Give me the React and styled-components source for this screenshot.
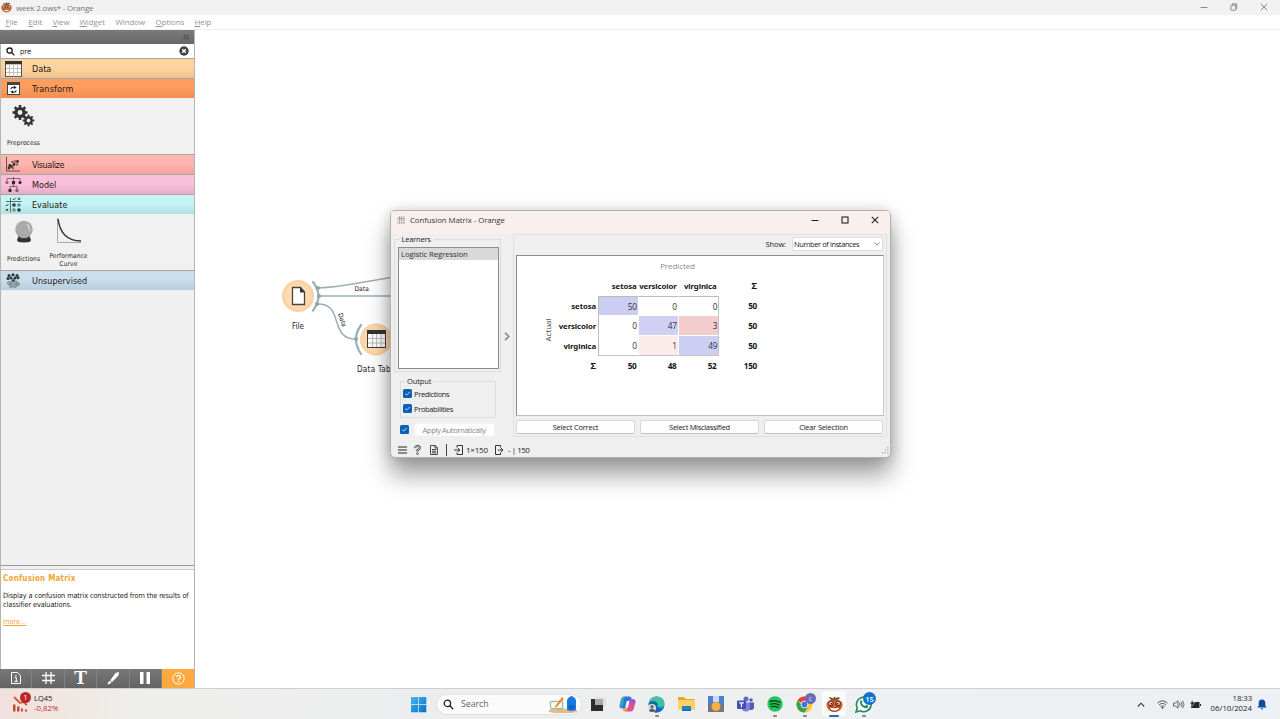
import React from "react";
import styled, { createGlobalStyle } from "styled-components";

const UI = '"Open Sans", "Noto Sans", sans-serif';
const TAHOMA = '"DejaVu Sans Condensed", "DejaVu Sans", sans-serif';

const Global = createGlobalStyle`
  * { box-sizing: border-box; }
  body { margin: 0; overflow: hidden; background: #fff; }
  svg { display: block; flex: none; }
`;

const Text = styled.span`
  font-family: ${(p) => p.$font || UI};
  font-size: ${(p) => p.$size || 8}px;
  letter-spacing: ${(p) => p.$track || 0}px;
  font-weight: ${(p) => p.$weight || 400};
  color: ${(p) => p.$color || "#222"};
  line-height: ${(p) => p.$line || 10}px;
  white-space: nowrap;
`;

const Screen = styled.div`
  width: 1280px; height: 719px;
  display: flex; flex-direction: column;
  background: #fff; overflow: hidden;
`;
const TitleBar = styled.header`
  height: 15px; background: #f2f2f2;
  display: flex; align-items: center; padding-left: 1px;
`;
const AppName = styled(Text)`flex: 1; margin-left: 4px;`;
const WindowButtons = styled.div`
  display: flex; gap: ${(p) => p.$gap}px; padding: 0 ${(p) => p.$right}px 1px 0; align-items: center;
`;
const MenuBar = styled.nav`
  height: 15px; display: flex; align-items: center; padding-left: 5.5px;
  border-bottom: 1px solid #f0f0f0;
`;
const MenuItem = styled(Text)`
  width: ${(p) => p.$w}px;
  &::first-letter { text-decoration: ${(p) => (p.$plain ? "none" : "underline")}; }
`;
const Body = styled.main`height: 658px; display: flex;`;

const Sidebar = styled.aside`
  width: 195px; height: 657.5px; display: flex; flex-direction: column;
  background: #f0f0f0; border-right: 1px solid #b4b4b4; border-left: 1px solid #b4b4b4;
`;
const SidebarHead = styled.div`
  height: 14px; margin-left: -1px; background: linear-gradient(#7b7b7b, #666);
  display: flex; justify-content: flex-end; align-items: center; padding-right: 5px;
`;
const SearchBox = styled.div`
  height: 14px; background: #fff; display: flex; align-items: center; padding: 0 5px 0 5px;
`;
const SearchValue = styled(Text)`flex: 1; margin-left: 5px; padding-top: 1px;`;
const Category = styled.div`
  height: 20px; display: flex; align-items: center; padding-left: 4px;
  border-top: 1px solid #a9a5a2; background: linear-gradient(${(p) => p.$from} 45%, ${(p) => p.$to});
`;
const CategoryIcon = styled.div`width: 27px; display: flex; justify-content: flex-start;`;
const ToolTray = styled.div`
  height: 56px; display: flex; background: #f1f1f1;
`;
const Tool = styled.div`
  width: 45px; display: flex; flex-direction: column; align-items: center; text-align: center;
  padding-top: ${(p) => p.$top || 4}px;
`;
const ToolLabel = styled(Text)`
  width: 44px; margin-top: ${(p) => p.$gap}px; white-space: normal;
`;
const Spacer = styled.div`flex: 1;`;
const Splitter = styled.div`height: 5px; border-top: 1px solid #999; border-bottom: 1px solid #c8c8c8; background: #f0f0f0;`;
const HelpPane = styled.section`
  height: 99px; background: #fff; padding: 4px 2px; display: flex; flex-direction: column; align-items: flex-start;
`;
const HelpTitle = styled(Text)``;
const HelpCopy = styled(Text)`margin-top: 8.5px;`;
const HelpLink = styled(Text)`margin-top: 7.5px; text-decoration: underline;`;
const DockBar = styled.div`height: 19px; display: flex; margin-left: -1px;`;
const DockButton = styled.div`
  width: ${(p) => (p.$on ? 32 : 32.6)}px; display: flex; align-items: center; justify-content: center;
  background: ${(p) => (p.$on ? "#ffa840" : "linear-gradient(#787878, #636363)")};
  border-right: ${(p) => (p.$on ? "0" : "1px solid #828282")};
`;

const Canvas = styled.div`flex: 1; position: relative; background: #fff;`;
const Scene = styled.svg`position: absolute; left: 0; top: 0;`;
const NodeLabel = styled(Text)`
  position: absolute; left: ${(p) => p.$x}px; top: ${(p) => p.$y}px;
  transform: rotate(${(p) => p.$turn || 0}deg);
`;
const Dialog = styled.section`
  position: absolute; left: 195px; top: 180px; width: 501px; height: 248px;
  background: #efefef; border: 1px solid #b3b0af; border-radius: 5px;
  box-shadow: 0 17px 24px rgba(0,0,0,.38), 0 0 13px rgba(0,0,0,.17);
  display: flex; flex-direction: column; overflow: hidden;
`;
const DialogTitle = styled.div`
  height: 23px; flex: none; background: #f9f0ee; display: flex; align-items: center; padding: 0 0 5px 6px;
`;
const DialogName = styled(Text)`flex: 1; margin-left: 5px;`;
const DialogBody = styled.div`height: 204px; display: flex; flex: none;`;
const LeftPane = styled.div`width: 110px; padding: 0 0 0 3px; display: flex; flex-direction: column;`;
const Group = styled.fieldset`
  margin: ${(p) => p.$top || 0}px 0 0 ${(p) => p.$left || 0}px; border: 1px solid #dedede; min-width: 0;
  width: ${(p) => p.$w}px; height: ${(p) => p.$h}px; padding: ${(p) => p.$pad};
`;
const Legend = styled.legend`padding: 0 2px; margin-left: ${(p) => p.$in}px; height: 10px; display: flex;`;
const LearnerList = styled.div`
  height: 122px; width: 101px; background: #fff; border: 1px solid #8c8c8c;
`;
const LearnerRow = styled.div`height: 12px; background: #d9d9d9; display: flex; align-items: center; padding-left: 2px;`;
const CheckRow = styled.label`display: flex; align-items: center; gap: 2px; height: 15px;`;
const ApplyRow = styled.div`display: flex; align-items: center; margin: 4px 0 0 5.5px; height: 15px; gap: 5px;`;
const PushButton = styled.div`
  width: ${(p) => p.$w}px; height: 14px; background: #fdfdfd; border: 1px solid ${(p) => (p.$dim ? "#f4f4f4" : "#d6d6d6")};
  border-bottom-color: ${(p) => (p.$dim ? "#eee" : "#c2c2c2")};
  border-radius: 2px; display: flex; align-items: center; justify-content: center;
`;
const Divider = styled.div`width: 12px; display: flex; align-items: center; justify-content: center;`;
const RightPane = styled.div`
  width: 374px; height: 203px; border: 1px solid #e0e0e0; padding: 1px 3px 0 2px;
  display: flex; flex-direction: column;
`;
const ShowRow = styled.div`height: 19px; display: flex; align-items: center; justify-content: flex-end; gap: 6px; padding-bottom: 3px;`;
const Select = styled.div`
  width: 91px; height: 14px; background: #fff; border: 1px solid #ddd; border-radius: 1px;
  display: flex; align-items: center; justify-content: space-between; padding: 0 2px 0 1px;
`;
const MatrixView = styled.div`
  height: 161px; width: 368px; background: #fff; border: 1px solid #999; border-color: #8e8e8e #c9c9c9 #bdbdbd #8e8e8e;
  padding: 5px 0 0 22px; display: flex; flex-direction: column;
`;
const Predicted = styled.div`margin-left: 78px; width: 121px; text-align: center; display: flex; justify-content: center; height: 15px;`;
const MatrixBody = styled.div`display: flex;`;
const ActualAxis = styled.div`
  width: 18px; padding-top: 20px; height: 80px; display: flex; align-items: center; justify-content: center;
`;
const ActualText = styled(Text)`transform: translateY(4px) rotate(-90deg);`;
const Matrix = styled.div`
  display: grid; grid-template-columns: 41px 41px 40px 40px 39px; grid-auto-rows: 20px;
`;
const Cell = styled.div`
  background: ${(p) => p.$bg || "transparent"};
  background-clip: padding-box;
  border-style: solid; border-width: 0 1px 1px 0; border-color: #fff;
  ${(p) => p.$l && "border-left: 1px solid #bcbcbc;"}
  ${(p) => p.$t && "border-top: 1px solid #bcbcbc;"}
  ${(p) => p.$r && "border-right-color: #c4c4c4;"}
  ${(p) => p.$b && "border-bottom-color: #c4c4c4;"}
  display: flex; justify-content: flex-end; align-items: center; padding: 1px ${(p) => p.$pr ?? 1}px 0 0; min-width: 0;
`;
const Actions = styled.div`display: flex; gap: 5px; padding: 4px 0 0 0;`;
const StatusBar = styled.footer`height: 19px; display: flex; align-items: center; padding: 4px 1px 0 7px;`;
const StatusItem = styled.div`display: flex; align-items: center; gap: ${(p) => p.$gap || 3}px; width: ${(p) => p.$w}px;`;
const Bar = styled.div`width: 1px; height: 12px; background: #444; margin-right: 7px;`;

const Taskbar = styled.footer`
  height: 31px; border-top: 1px solid #cfcfcf; display: flex; align-items: center;
  background: linear-gradient(90deg, #f1e0dd 0, #f1e6e0 60px, #eeeeec 130px, #ecedee 420px, #eef0f0 800px, #edf0f4 1280px);
`;
const Stocks = styled.div`width: 410px; padding-left: 12px; display: flex; align-items: center; gap: 4px;`;
const StockLines = styled.div`display: flex; flex-direction: column; padding-bottom: 1px;`;
const TaskSearch = styled.div`
  width: 146px; height: 21px; border-radius: 11px; background: #fbfbfb; border: 1px solid #e1e1e1; margin-left: 9px;
  display: flex; align-items: center; padding: 0 3px 0 6px; overflow: hidden;
`;
const SearchHint = styled(Text)`flex: 1; margin-left: 7px;`;
const Apps = styled.div`display: flex; flex: 1; margin-left: 1px;`;
const TaskApp = styled.div`
  width: 29.55px; height: 30px; display: flex; flex-direction: column; align-items: center; padding-top: 7px;
  position: relative;
`;
const ActivePlate = styled.div`
  width: 24px; height: 25px; margin-top: -5px; padding-top: 5px; background: #fbfbfb; border-radius: 2px; display: flex; justify-content: center;
`;
const Running = styled.div`
  position: absolute; bottom: 2px; width: ${(p) => (p.$on ? 10 : 4)}px; height: 2px; border-radius: 1px;
  background: ${(p) => (p.$on ? "#1572c4" : "#858585")};
`;
const Badge = styled.div`
  position: absolute; left: ${(p) => p.$x}px; top: ${(p) => p.$y}px; width: ${(p) => p.$d}px; height: ${(p) => p.$d}px;
  border-radius: 50%; background: ${(p) => p.$bg}; display: flex; align-items: center; justify-content: center;
`;
const StockIcon = styled.div`position: relative;`;
const Tray = styled.div`display: flex; align-items: center; padding-right: 13px;`;
const TrayIcons = styled.div`display: flex; align-items: center; gap: 5px; margin: 0 6px 0 12px;`;
const Clock = styled.div`width: 45px; display: flex; flex-direction: column; align-items: flex-end; margin-right: 5px; padding-bottom: 1px;`;

const OrangeFace = ({ size }) => (
  <svg width={size} height={size} viewBox="0 0 18 18">
    <path d="M1.500 6Q-.5 9 1 12Q3 17 9 17Q15 17 17 12Q18.500 9 16.500 6Q13 3 9 3.500Q5 3 1.500 6Z" fill="#e8682c" />
    <path d="M9 4.500Q7 1 3 1.500Q5 4.500 8 4.800ZM9 4.500Q11 0 15 2Q12.500 4.800 9 4.800ZM8 1h2v4H8z" fill="#6b5526" />
    <circle cx="5.300" cy="8" r="2.500" fill="#fff" stroke="#7b2413" strokeWidth="1.200" />
    <circle cx="12.700" cy="8" r="2.500" fill="#fff" stroke="#7b2413" strokeWidth="1.200" />
    <circle cx="5.800" cy="8.200" r="1.100" fill="#222" /><circle cx="12.200" cy="8.200" r="1.100" fill="#222" />
    <path d="M3 11.500Q9 13.500 15 11.500Q13.500 16 9 16Q4.500 16 3 11.500Z" fill="#fff" stroke="#7c2014" strokeWidth=".9" />
  </svg>
);

const WinIcon = ({ kind, color = "#222", w = 1 }) => (
  <svg width="8" height="8" viewBox="0 0 8 8" fill="none" stroke={color} strokeWidth={w}>
    {kind === "min" && <path d="M.5 4.500h7" />}
    {kind === "max" && <rect x="1" y="1" width="6" height="6" />}
    {kind === "restore" && <><rect x=".8" y="2.200" width="5" height="5" rx=".7" /><path d="M2.500 2V.8h4.200v4.700H6" /></>}
    {kind === "close" && <path d="M.8.8l6.400 6.400M7.200.8L.8 7.200" />}
  </svg>
);

const Magnifier = ({ size, color, w = 1.5 }) => (
  <svg width={size} height={size} viewBox="0 0 10 10" fill="none" stroke={color} strokeWidth={w}>
    <circle cx="4" cy="4" r="2.900" /><path d="M6.200 6.200L9.300 9.300" />
  </svg>
);

const TableIcon = ({ w = 17, h = 16 }) => (
  <svg width={w} height={h} viewBox="0 0 17 16">
    <rect x=".5" y=".5" width="16" height="15" fill="#fff" stroke="#555" />
    <path d="M0 0h17v3.300H0z" fill="#333" />
    <path d="M4.500 3.500v12M8.500 3.500v12M12.500 3.500v12M1 7.500h15M1 11.500h15" stroke="#c6c0bb" />
  </svg>
);

const Gear = ({ x, y, r }) => (
  <g transform={`translate(${x} ${y})`}>
    <circle r={r * 0.54} fill="none" stroke="#333" strokeWidth={r * 0.42} />
    {[0, 45, 90, 135, 180, 225, 270, 315].map((a) => (
      <rect key={a} x={-r * 0.17} y={-r} width={r * 0.34} height={r * 0.38} fill="#333" transform={`rotate(${a})`} />
    ))}
  </g>
);

const catIcons = {
  Data: <TableIcon />,
  Transform: (
    <svg width="16" height="13" viewBox="-2 0 16 13">
      <rect x=".5" y=".5" width="12" height="12" fill="#fff" stroke="#444" /><path d="M0 0h13v3H0z" fill="#444" />
      <path d="M3.800 7Q4.500 4.800 7.500 5.300M9.300 8.500Q8.500 10.700 5.600 10.200" fill="none" stroke="#222" strokeWidth="1.100" />
      <path d="M7 3.700l2.700 2-3 1.300zM6 8.600l-2.700 1.200 2.900 1.900z" fill="#222" />
    </svg>
  ),
  Visualize: (
    <svg width="16" height="15" viewBox="0 0 16 15">
      <path d="M1.500 0v14H15" fill="none" stroke="#6b504d" />
      {[[4, 11], [6.500, 9.500], [4.800, 8.500], [9, 7.500], [12.500, 4.500]].map(([a, b]) => <circle key={a} cx={a} cy={b} r="1.400" fill="#382c2b" />)}
      {[[7.500, 5], [8, 11], [12, 7.500], [10, 4.500]].map(([a, b]) => <circle key={a + b} cx={a} cy={b} r="1.300" fill="#8a6461" />)}
    </svg>
  ),
  Model: (
    <svg width="17" height="16" viewBox="0 0 17 16">
      <path d="M8.500 0v5M2 4V1.500h13v2.500M8.500 5v5M5 12v-2.500h7V12" fill="none" stroke="#74586a" strokeWidth=".9" />
      <circle cx="2" cy="5.500" r="1.600" fill="#86616f" /><rect x="6.900" y="4" width="3.200" height="3.200" fill="#33262c" /><circle cx="15" cy="5.500" r="1.600" fill="#33262c" />
      <circle cx="5" cy="13.500" r="1.700" fill="#33262c" /><circle cx="12" cy="13.500" r="1.700" fill="#86616f" />
    </svg>
  ),
  Evaluate: (
    <svg width="17" height="16" viewBox="0 0 17 16">
      <path d="M5.500 1v14.500M1 4.500h15.500" fill="none" stroke="#566e6f" />
      <path d="M7.800 1.800l1 1L10.600.8M13 .8l2 2M15 .8l-2 2M.8 8l.9.900L3.500 7M1 11.800l2 2M3 11.800l-2 2" fill="none" stroke="#263334" />
      <circle cx="9" cy="8" r="1.800" fill="#2b3a3b" /><circle cx="14" cy="8" r="1.800" fill="#6d8b8c" />
      <circle cx="9" cy="13" r="1.800" fill="#6d8b8c" /><circle cx="14" cy="13" r="1.800" fill="#2b3a3b" />
    </svg>
  ),
  Unsupervised: (
    <svg width="16" height="15" viewBox="-1 0 16 15">
      {[[3, 2.500], [7, 1.800], [11, 2.500], [5, 5], [9, 5], [12, 4.800], [7.200, 7.500], [2, 5.500]].map(([a, b]) => <circle key={a} cx={a} cy={b} r="1.500" fill="#2c3438" />)}
      {[[3, 10], [6, 9.500], [10, 9.500], [12, 11], [5, 13], [9, 13]].map(([a, b]) => <circle key={a} cx={a} cy={b} r="1.500" fill="#a4b6c0" stroke="#5e6c74" strokeWidth=".7" />)}
    </svg>
  ),
};

const CategoryRow = ({ name, from, to, track }) => (
  <Category $from={from} $to={to}>
    <CategoryIcon>{catIcons[name]}</CategoryIcon>
    <Text $font={TAHOMA} $size={9} $track={track} $color="#1d1715" $line={12}>{name}</Text>
  </Category>
);

const Check = () => (
  <svg width="9" height="9" viewBox="0 0 9 9">
    <rect width="9" height="9" rx="1.500" fill="#0b62b5" /><path d="M2.200 4.600l1.600 1.500 3-3.200" fill="none" stroke="#cfe5fa" strokeWidth=".9" />
  </svg>
);

const rows = [
  ["setosa", [50, 0, 0], ["#cccdf3", "", ""], 50],
  ["versicolor", [0, 47, 3], ["", "#cfd0f4", "#f3cccd"], 50],
  ["virginica", [0, 1, 49], ["", "#fbebeb", "#cdcef4"], 50],
];
const Bold = ({ children, track = -0.12, size = 7.8 }) => (
  <Text $font={'"Noto Sans", sans-serif'} $weight={700} $size={size} $track={track} $color="#161616">{children}</Text>
);

const ConfusionMatrix = () => (
  <MatrixView>
    <Predicted><Text $size={8} $track={-0.1} $color="#8b8b8b">Predicted</Text></Predicted>
    <MatrixBody>
      <ActualAxis><ActualText $size={8} $color="#444">Actual</ActualText></ActualAxis>
      <Matrix>
        <Cell />
        <Cell $pr={1.500}><Bold>setosa</Bold></Cell>
        <Cell $pr={1.500}><Bold>versicolor</Bold></Cell>
        <Cell $pr={1.500}><Bold>virginica</Bold></Cell>
        <Cell $pr={0}><Bold size={9.500}>Σ</Bold></Cell>
        {rows.map(([name, vals, bgs, sum], r) => (
          <React.Fragment key={name}>
            <Cell><Bold>{name}</Bold></Cell>
            {vals.map((v, c) => (
              <Cell key={c} $pr={c === 2 ? 1 : 1.500} $bg={bgs[c]} $l={c === 0} $t={r === 0} $r={c === 2} $b={r === 2}>
                <Text $size={8.300} $track={-0.4} $color="#333">{v}</Text>
              </Cell>
            ))}
            <Cell $pr={0}><Bold size={8.200} track={-0.3}>{sum}</Bold></Cell>
          </React.Fragment>
        ))}
        <Cell><Bold size={9.500}>Σ</Bold></Cell>
        {[50, 48, 52, 150].map((v, i) => <Cell key={v} $pr={i === 3 ? 0 : 1.500}><Bold size={8.200} track={-0.3}>{v}</Bold></Cell>)}
      </Matrix>
    </MatrixBody>
  </MatrixView>
);

const actions = [["Select Correct", -0.2], ["Select Misclassified", -0.3], ["Clear Selection", -0.2]];

const ConfusionDialog = () => (
  <Dialog>
    <DialogTitle>
      <svg width="8" height="8" viewBox="0 0 8 8" stroke="#888" strokeWidth=".8" fill="none">
        <path d="M2.700 0v8M0 2.400h8M4 1h1M6 1h1.500M.3 4.700h1.300M.3 7h1.300" /><path d="M4 4.300h1.300M6.300 4.300h1.300M4 6.800h1.300M6.300 6.800h1.300" strokeWidth="1.400" />
      </svg>
      <DialogName $size={7.8} $color="#333" $track={-0.04}>Confusion Matrix - Orange</DialogName>
      <WindowButtons $gap={22} $right={11}><WinIcon kind="min" /><WinIcon kind="max" w={1.1} /><WinIcon kind="close" w={1.1} /></WindowButtons>
    </DialogTitle>
    <DialogBody>
      <LeftPane>
        <Group $w={107} $h={138} $pad="3px 0 0 3px">
          <Legend $in={1.5}><Text $size={7.5} $track={-0.2}>Learners</Text></Legend>
          <LearnerList><LearnerRow><Text $size={7.8} $track={-0.12} $color="#333">Logistic Regression</Text></LearnerRow></LearnerList>
        </Group>
        <Group $w={96} $h={42} $top={4} $left={6} $pad="0 0 0 2px">
          <Legend $in={2}><Text $size={7.5} $track={-0.1}>Output</Text></Legend>
          <CheckRow><Check /><Text $size={7.5} $track={-0.35}>Predictions</Text></CheckRow>
          <CheckRow><Check /><Text $size={7.5} $track={-0.35}>Probabilities</Text></CheckRow>
        </Group>
        <ApplyRow><Check /><PushButton $w={81} $dim><Text $size={7.8} $track={-0.45} $color="#8b8b8b">Apply Automatically</Text></PushButton></ApplyRow>
      </LeftPane>
      <Divider>
        <svg width="6" height="9" viewBox="0 0 6 9" fill="none" stroke="#8a8a8a" strokeWidth="1.700"><path d="M1 .8l3.800 3.700L1 8.200" /></svg>
      </Divider>
      <RightPane>
        <ShowRow>
          <Text $size={7.5} $track={-0.1}>Show:</Text>
          <Select>
            <Text $size={7.5} $track={-0.4} $line={10}>Number of instances</Text>
            <svg width="6" height="4" viewBox="0 0 6 4" fill="none" stroke="#666" strokeWidth=".8"><path d="M.4.5L3 3.200 5.600.5" /></svg>
          </Select>
        </ShowRow>
        <ConfusionMatrix />
        <Actions>
          {actions.map(([t, track]) => (
            <PushButton key={t} $w={119}><Text $size={7.5} $track={track}>{t}</Text></PushButton>
          ))}
        </Actions>
      </RightPane>
    </DialogBody>
    <StatusBar>
      <StatusItem $w={16}><svg width="9" height="8" viewBox="0 0 9 8" stroke="#222" strokeWidth="1.200"><path d="M0 1h9M0 4h9M0 7h9" /></svg></StatusItem>
      <StatusItem $w={16}>
        <svg width="7" height="10" viewBox="0 0 7 10" fill="none"><path d="M1.200 3.200Q1 1.100 3.500 1.100T5.800 3Q5.800 4.300 3.500 5V6.800" stroke="#333" strokeWidth="2" /><path d="M1.200 3.200Q1 1.100 3.500 1.100T5.800 3Q5.800 4.300 3.500 5V6.600" stroke="#eee" strokeWidth=".7" /><circle cx="3.500" cy="8.700" r=".9" stroke="#333" strokeWidth=".7" /></svg>
      </StatusItem>
      <StatusItem $w={16}><svg width="8" height="10" viewBox="0 0 8 10" fill="none" stroke="#333" strokeWidth=".9"><path d="M.5.5h4.700l2.200 2.300v6.700H.5zM5 .5v2.500h2.400M2 4.500h4M2 6.200h4M2 7.800h4" /></svg></StatusItem>
      <Bar />
      <StatusItem $w={41}>
        <svg width="9" height="10" viewBox="0 0 9 10" fill="none" stroke="#333"><path d="M3 2.500v-2h5.500v9H3v-2M0 5h5.500M3.800 3l2 2-2 2" /></svg>
        <Text $size={8} $track={-0.2}>1×150</Text>
      </StatusItem>
      <StatusItem $w={40} $gap={4}>
        <svg width="9" height="10" viewBox="0 0 9 10" fill="none" stroke="#333"><path d="M5.500 2.500v-2H.5v9h5v-2M3 5h5M6 3l2 2-2 2" /></svg>
        <Text $size={8} $track={-0.5}>- | 150</Text>
      </StatusItem>
      <Spacer />
      <svg width="8" height="8" viewBox="0 0 8 8" fill="#bbb"><path d="M6 1h1.500v1.500H6zM6 3.500h1.500V5H6zM6 6h1.500v1.500H6zM3.500 3.500H5V5H3.500zM3.500 6H5v1.500H3.500zM1 6h1.500v1.500H1z" /></svg>
    </StatusBar>
  </Dialog>
);

const Workflow = () => (
  <Canvas>
    <Scene width="250" height="420" viewBox="195 30 250 420">
      <defs>
        <radialGradient id="node"><stop offset="0" stopColor="#ffe2c2" /><stop offset=".75" stopColor="#fdd9ae" /><stop offset="1" stopColor="#fbcf9e" /></radialGradient>
      </defs>
      <g fill="none" stroke="#9cafb8" strokeWidth="1.500">
        <path d="M318 288C345 287 365 281 395 277M318 296h80M317 304C345 303 328 339 356 339" />
      </g>
      <g fill="none" stroke="#9cafb8" strokeWidth="2.200" strokeLinecap="round">
        <path d="M313 282Q324 296 313 310.500M361 325Q351 339 361 354" />
      </g>
      <g fill="#8fa5b0"><circle cx="318" cy="288" r="2" /><circle cx="319" cy="296" r="2" /><circle cx="317" cy="304" r="2" /><circle cx="356" cy="339" r="2" /></g>
      <circle cx="298" cy="296" r="16" fill="url(#node)" />
      <circle cx="376" cy="339.500" r="16" fill="url(#node)" />
      <path d="M292.500 287.500h8l4 4.500v12.500h-12z" fill="#fff" stroke="#4a423b" strokeWidth="1.300" /><path d="M300 287l5 5.500h-5z" fill="#333" />
      <g transform="translate(367 330)">
        <rect x=".5" y=".5" width="18" height="17" fill="#fff" stroke="#433b35" /><path d="M0 0h19v4H0z" fill="#333" />
        <path d="M5.500 4v13M9.500 4v13M14 4v13M1 8.500h17M1 13h17" stroke="#bbb" />
      </g>
    </Scene>
    <NodeLabel $x={97} $y={292} $font={TAHOMA} $size={8}>File</NodeLabel>
    <NodeLabel $x={162} $y={335} $font={TAHOMA} $size={8} $track={0.3}>Data Table</NodeLabel>
    <NodeLabel $x={159.5} $y={254} $font={TAHOMA} $size={6.5} $track={0.1}>Data</NodeLabel>
    <NodeLabel $x={140} $y={285} $turn={72} $font={TAHOMA} $size={6.5}>Data</NodeLabel>
    <ConfusionDialog />
  </Canvas>
);

const dock = [
  <svg width="10" height="12" viewBox="0 0 10 12" fill="none" stroke="#fff"><path d="M.5.5h6l3 3v8h-9zM3.500 5.500h1.800V9M3.300 9.300h3.700" /><path d="M4.300 3h1.300v1.200H4.300z" fill="#fff" stroke="none" /></svg>,
  <svg width="13" height="12" viewBox="0 0 13 12" stroke="#fff" strokeWidth="1.300"><path d="M4 0v12M9 0v12M0 3.500h13M0 8.500h13" /></svg>,
  <Text $font={'"Liberation Serif", serif'} $weight={700} $size={19} $color="#fff" $line={18}>T</Text>,
  <svg width="12" height="13" viewBox="0 0 12 13" fill="#fff"><path d="M8.500 1L12 0l-.5 3.500L5 10 3.300 8.200zM2.700 8.800l1.800 1.800Q3 12.500.5 12.500Q1 10 2.700 8.800z" /></svg>,
  <svg width="10" height="12" viewBox="0 0 10 12" fill="#fff"><path d="M0 0h3.500v12H0zM6.500 0H10v12H6.500z" /></svg>,
  <svg width="13" height="13" viewBox="0 0 13 13" fill="none" stroke="#fff"><circle cx="6.500" cy="6.500" r="5.700" /><path d="M4.600 5.200Q4.700 3.300 6.600 3.300T8.500 5Q8.500 5.900 7.300 6.500T6.500 8.200" strokeWidth="1.200" /><circle cx="6.500" cy="9.700" r=".8" fill="#fff" stroke="none" /></svg>,
];

const appIcons = [
  <svg width="16" height="16" viewBox="0 0 16 16"><path d="M5 1h11v10H5z" fill="#e3e3e3" /><path d="M1 3h6v6h6v6H1z" fill="#2b2b2b" /><path d="M5 3h8v6H5z" fill="#aaa" /></svg>,
  <svg width="17" height="16" viewBox="0 0 17 16"><path d="M5.500.5h5q1.500 0 2 1.700l.7 2.500H9.300L6.500 12.500H3Q0 12.500.7 9L2 3.500Q3 .5 5.500.5z" fill="#2878dc" /><path d="M2 4Q3 .8 5.500.5L3.800 9.500 2 12Q0 11 .8 8z" fill="#35a6c8" /><path d="M11 3.200h3q3 0 2.300 3.500L15 12q-.8 3.500-3.500 3.500h-5q-2 0-2.500-2.500h3q1.500 0 2-2z" fill="#d95296" /><path d="M2 11.500q3 1.500 5-.5l1 4.300H6Q4 15 3.500 13z" fill="#f3a33c" /><path d="M11 3.200h3q2.800.3 2.200 3.800L10 7.500z" fill="#a64fd0" /><path d="M7.800 5h2.500L8.700 10.500H6.300z" fill="#f4f4f5" /></svg>,
  <svg width="17" height="17" viewBox="0 0 17 17"><circle cx="8.500" cy="8.500" r="8" fill="#1687c8" /><path d="M1 6Q3 .5 9 .5Q16 1 16.500 7Q16.500 11 12 11Q9.500 11 10 8.500Q9 5 5 5Q2.500 5 1 6z" fill="#40c3a0" /><path d="M.7 7Q3 4.500 6.500 5.500Q10 6.500 9 9Q8 12 12 12.500Q14 12.500 15.500 12Q12 17 7 16.500Q1 15 .7 7z" fill="#1767ad" /><circle cx="4" cy="12" r="4" fill="#ddd" /><circle cx="4" cy="10.700" r="1.600" fill="#665" /><path d="M1 15Q1.500 12.500 4 12.500T7 15Q4 17 1 15z" fill="#557" /></svg>,
  <svg width="17" height="15" viewBox="0 0 17 15"><path d="M0 1h6l2 2h8.500v11H0z" fill="#e4a72e" /><path d="M0 4h17v10H0z" fill="#fbd266" /><path d="M4 10h9v5H4z" fill="#2382ca" /><path d="M4 13.500h9V15H4z" fill="#176aaa" /></svg>,
  <svg width="16" height="16" viewBox="0 0 16 16"><path d="M0 0h16v16H0z" fill="#77757b" /><path d="M0 0h5v8H0zM11 0h5v8h-5z" fill="#4d80d2" /><path d="M5 0h6v6H5z" fill="#c8dafa" /><circle cx="8" cy="10.500" r="4.500" fill="#f6b044" /></svg>,
  <svg width="17" height="16" viewBox="0 0 17 16"><circle cx="9" cy="3" r="2.500" fill="#6068c4" /><circle cx="14" cy="4" r="1.800" fill="#5059b8" /><path d="M11 6.500h6v4.500q0 3-3 3t-3-2z" fill="#5059b8" /><path d="M5 6.500h8V11q0 4.500-4 4.500t-4-3z" fill="#7b83dc" /><rect x="0" y="4.500" width="9" height="8.500" rx="1" fill="#464eb0" /><path d="M2.200 6.800h4.600M4.500 6.800v4.500" stroke="#fff" strokeWidth="1.200" /></svg>,
  <svg width="16" height="16" viewBox="0 0 16 16"><circle cx="8" cy="8" r="7.700" fill="#20c65a" /><path d="M3.200 5.500Q8 3.800 13 6.300M3.800 8.200Q8 6.800 12.200 9M4.400 10.700Q8 9.700 11.400 11.500" fill="none" stroke="#15361f" strokeWidth="1.400" strokeLinecap="round" /></svg>,
  <svg width="17" height="17" viewBox="0 0 17 17"><circle cx="8.500" cy="8.500" r="8" fill="#fbc92d" /><path d="M8.500 8.500L1.600 4.500A8 8 0 0 1 15.400 4.500z" fill="#df4434" /><path d="M1.600 4.500A8 8 0 0 0 8.500 16.500L12 10.500 8.500 8.500H5z" fill="#2da44e" /><circle cx="8.500" cy="8.500" r="3.700" fill="#fff" /><circle cx="8.500" cy="8.500" r="2.900" fill="#3975e8" /></svg>,
  <OrangeFace size={17} />,
  <svg width="17" height="17" viewBox="0 0 17 17"><path d="M1 16l1.300-4.200A7.300 7.300 0 1 1 5.200 14.800z" fill="#f3faf5" stroke="#238b5b" strokeWidth="1.600" /><path d="M5 5q1.500-2 2.500.7L6.800 7.200Q8 9.300 10 10l1.200-1.300L13.400 10Q13 12.500 10.500 12.300Q5 11 5 5z" fill="#238b5b" /></svg>,
];

const TaskbarRow = () => (
  <Taskbar>
    <Stocks>
      <StockIcon>
        <svg width="18" height="21" viewBox="0 0 18 21"><path d="M2 3l6 6 3-1 4 3" fill="none" stroke="#d45a32" strokeWidth="1.800" /><path d="M1 10.500h2.500v7H1zM5 12.500h2.500v5H5zM9 14.500h2v3H9zM13 15.500h2v2h-2z" fill="#c2512d" /></svg>
        <Badge $x={8} $y={-2} $d={11} $bg="#ba2727"><Text $size={7.5} $color="#fff">1</Text></Badge>
      </StockIcon>
      <StockLines><Text $size={7.5} $line={10}>LQ45</Text><Text $size={7.8} $color="#b92b31" $line={11}>-0,82%</Text></StockLines>
    </Stocks>
    <svg width="17" height="17" viewBox="0 0 17 17"><defs><linearGradient id="win" x2="1" y2="1"><stop stopColor="#42b8ee" /><stop offset="1" stopColor="#0670c8" /></linearGradient></defs><path d="M1 1h7.300v7.300H1zM9 1h7.300v7.300H9zM1 9h7.300v7.300H1zM9 9h7.300v7.300H9z" fill="url(#win)" /></svg>
    <TaskSearch>
      <Magnifier size={11} color="#222" w={1.2} />
      <SearchHint $size={8.800} $track={-0.05} $color="#666">Search</SearchHint>
      <svg width="30" height="17" viewBox="0 0 30 17"><ellipse cx="15" cy="15" rx="14.500" ry="2.300" fill="#e3b986" /><path d="M2 6l6-1 1 1 5-2 1 8-6 1-1-1-5 1z" fill="#f8faf3" stroke="#5e9c78" strokeWidth=".8" /><path d="M14 1l2 1.500L9 11l-2 .5.500-2z" fill="#e99335" /><path d="M19 5q0-4 4.500-4t4.500 4v9q-4.500 2-9 0z" fill="#187ae0" /><path d="M21.500 1.500q2-2 4 0" stroke="#1454a7" fill="none" /><rect x="20.500" y="9" width="6" height="4" rx="1" fill="#1261bc" /></svg>
    </TaskSearch>
    <Apps>
      {appIcons.map((icon, i) => (
        <TaskApp key={i}>
          {i === 8 ? <ActivePlate>{icon}</ActivePlate> : icon}
          {[2, 6, 7, 8, 9].includes(i) && <Running $on={i === 8} />}
          {i === 7 && <Badge $x={15} $y={4} $d={11} $bg="#686bb8"><Text $size={6.5} $color="#e4e4ff">c</Text></Badge>}
          {i === 9 && <Badge $x={14} $y={3} $d={13} $bg="#0874cf"><Text $size={7.5} $weight={600} $color="#fff">15</Text></Badge>}
        </TaskApp>
      ))}
    </Apps>
    <Tray>
      <svg width="8" height="5" viewBox="0 0 8 5" fill="none" stroke="#333" strokeWidth="1.100"><path d="M.8 4.500L4 1.200l3.200 3.300" /></svg>
      <TrayIcons>
        <svg width="11" height="9" viewBox="0 0 11 9" fill="none" stroke="#444" strokeWidth=".9"><path d="M.5 3.200Q5.500-1.500 10.500 3.200M2 5Q5.500 1.800 9 5M3.500 6.700Q5.500 5 7.500 6.700" /><circle cx="5.500" cy="7.800" r=".9" fill="#333" stroke="none" /></svg>
        <svg width="12" height="9" viewBox="0 0 12 9" fill="none" stroke="#444" strokeWidth=".8"><path d="M.5 3h2L5 .8v7.400L2.500 6h-2zM6.500 3q1 1.500 0 3M8 1.800q2 2.700 0 5.400M9.500.7q3 3.800 0 7.600" /></svg>
        <svg width="11" height="9" viewBox="0 0 11 9"><path d="M1 2h8.500v6H1z" fill="#252525" /><path d="M10 4h1v2h-1z" fill="#252525" /><path d="M2.500 0L0 4h2l-.5 3L5 2.500H3z" fill="#252525" stroke="#edf0f4" strokeWidth=".4" /></svg>
      </TrayIcons>
      <Clock><Text $size={7.800} $track={-0.1} $line={10}>18:33</Text><Text $size={7.800} $line={11}>06/10/2024</Text></Clock>
      <svg width="10" height="11" viewBox="0 0 10 11" fill="#12499a"><path d="M5 .5q3.300 0 3.300 3.500v2.500L9.500 8.500h-9L1.700 6.500V4Q1.700.5 5 .5zM3.700 9.200h2.600Q6 10.500 5 10.500T3.700 9.200z" /></svg>
    </Tray>
  </Taskbar>
);

export default function App() {
  return (
    <Screen>
      <Global />
      <TitleBar>
        <OrangeFace size={11} />
        <AppName $size={8} $track={-0.22} $color="#777">week 2.ows* - Orange</AppName>
        <WindowButtons $gap={22} $right={12}><WinIcon kind="min" color="#888" /><WinIcon kind="restore" color="#888" /><WinIcon kind="close" color="#888" /></WindowButtons>
      </TitleBar>
      <MenuBar>
        {[["File", 23], ["Edit", 24], ["View", 27], ["Widget", 36], ["Window", 40], ["Options", 39], ["Help", 30]].map(([t, w]) => (
          <MenuItem key={t} $w={w} $plain={t === "Window"} $size={8} $track={-0.1} $color="#949494">{t}</MenuItem>
        ))}
      </MenuBar>
      <Body>
        <Sidebar>
          <SidebarHead><svg width="6" height="6" viewBox="0 0 6 6" fill="none" stroke="#3e3e3e" strokeWidth=".9"><path d="M2.800.5L.7 3l2.100 2.500M5.500.5L3.400 3l2.100 2.500" /></svg></SidebarHead>
          <SearchBox>
            <Magnifier size={9} color="#222" />
            <SearchValue $font={TAHOMA} $size={7.5}>pre</SearchValue>
            <svg width="10" height="10" viewBox="0 0 10 10"><circle cx="5" cy="5" r="4.700" fill="#404040" /><path d="M3.200 3.200l3.600 3.600M6.800 3.200L3.200 6.800" stroke="#fff" strokeWidth="1.400" /></svg>
          </SearchBox>
          <CategoryRow name="Data" from="#ffd39f" to="#efc18d" />
          <CategoryRow name="Transform" from="#ff9d5e" to="#ed8e50" track={0.15} />
          <ToolTray>
            <Tool $top={6}>
              <svg width="24" height="24" viewBox="1 0 24 24"><Gear x={9} y={8.500} r={7.500} /><Gear x={17.500} y={16.500} r={5.800} /></svg>
              <ToolLabel $gap={10} $font={TAHOMA} $size={6.5} $track={0.12}>Preprocess</ToolLabel>
            </Tool>
          </ToolTray>
          <CategoryRow name="Visualize" from="#ffb6ae" to="#efa49d" track={-0.4} />
          <CategoryRow name="Model" from="#fbc0d9" to="#e8aec7" />
          <CategoryRow name="Evaluate" from="#c4f4f3" to="#b1e2e1" />
          <ToolTray>
            <Tool $top={6}>
              <svg width="20" height="23" viewBox="0 0 20 23"><path d="M4.500 16h11l1.500 4q0 2.500-7 2.500T3 20z" fill="#333" /><circle cx="10" cy="9.500" r="8.700" fill="#aaa" /><path d="M12 3.500Q17 6 15 12.500Q15.500 7 12 3.500z" fill="#fff" /></svg>
              <ToolLabel $gap={11} $font={TAHOMA} $size={6.5} $track={0.1}>Predictions</ToolLabel>
            </Tool>
            <Tool $top={4}>
              <svg width="26" height="26" viewBox="0 0 26 26" fill="none"><path d="M1.500 0v24.500H25" stroke="#aaa" /><path d="M2 1Q5 23 25 23" stroke="#333" strokeWidth="1.500" /></svg>
              <ToolLabel $gap={7.5} $font={TAHOMA} $size={6.5} $track={0.1} $line={8}>Performance Curve</ToolLabel>
            </Tool>
          </ToolTray>
          <CategoryRow name="Unsupervised" from="#c9dfed" to="#b7cedb" />
          <Spacer />
          <Splitter />
          <HelpPane>
            <HelpTitle $font={TAHOMA} $weight={700} $size={8} $track={0.22} $color="#f3a431">Confusion Matrix</HelpTitle>
            <HelpCopy $font={TAHOMA} $size={7.3} $track={-0.1} $line={8.7}>Display a confusion matrix constructed from the results of<br />classifier evaluations.</HelpCopy>
            <HelpLink $font={TAHOMA} $size={7.3} $color="#f0a63c">more...</HelpLink>
          </HelpPane>
          <DockBar>{dock.map((icon, i) => <DockButton key={i} $on={i === 5}>{icon}</DockButton>)}</DockBar>
        </Sidebar>
        <Workflow />
      </Body>
      <TaskbarRow />
    </Screen>
  );
}
